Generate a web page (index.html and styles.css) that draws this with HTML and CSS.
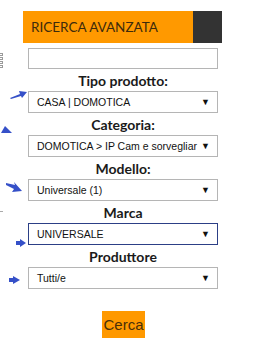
FILE: index.html
```html
<!DOCTYPE html>
<html>
<head>
<meta charset="UTF-8">
<title>Ricerca avanzata</title>
<link rel="stylesheet" href="styles.css">
</head>
<body>
<div class="side-icon">
  <span></span><span></span><span></span><span></span>
</div>
<div class="side-dash"></div>

<div class="box">
  <div class="head">
    <div class="head-title">RICERCA AVANZATA</div>
    <div class="head-dark"></div>
  </div>
  <div class="form">
    <div class="text-in"></div>

    <div class="lbl">Tipo prodotto:</div>
    <div class="sel"><span>CASA | DOMOTICA</span><b>&#9660;</b></div>

    <div class="lbl">Categoria:</div>
    <div class="sel"><span>DOMOTICA &gt; IP Cam e sorvegliar</span><b>&#9660;</b></div>

    <div class="lbl">Modello:</div>
    <div class="sel"><span>Universale (1)</span><b>&#9660;</b></div>

    <div class="lbl">Marca</div>
    <div class="sel focus"><span>UNIVERSALE</span><b>&#9660;</b></div>

    <div class="lbl">Produttore</div>
    <div class="sel"><span>Tutti/e</span><b>&#9660;</b></div>

    <div class="btn-row"><div class="btn">Cerca</div></div>
  </div>
</div>

<!-- annotation arrows -->
<svg class="arr a1" width="18" height="10" viewBox="0 0 18 10"><path d="M0 8 L10 4 L9 1 L17 2 L12 8 L11 6 L1 9 Z" fill="#3550c8"/></svg>
<svg class="arr a2" width="11" height="8" viewBox="0 0 11 8"><path d="M0 7 L4 0 L11 7 Z" fill="#3550c8"/></svg>
<svg class="arr a3" width="17" height="11" viewBox="0 0 17 11"><path d="M0 1 L9 3 L8 0 L16 9 L6 10 L8 7 L0 3 Z" fill="#3550c8"/></svg>
<svg class="arr a4" width="10" height="8" viewBox="0 0 10 8"><path d="M0 2 L4 2 L4 0 L10 4 L4 8 L4 6 L0 6 Z" fill="#3550c8"/></svg>
<svg class="arr a5" width="11" height="8" viewBox="0 0 11 8"><path d="M0 2 L4 2 L4 0 L11 4 L4 8 L4 6 L0 6 Z" fill="#3550c8"/></svg>
</body>
</html>
```

FILE: styles.css
```css
body {
  margin: 0;
  background: #ffffff;
  font-family: Lato, "Liberation Sans", sans-serif;
  color: #111111;
}
.box {
  margin-left: 23px;
  margin-top: 11px;
  width: 199px;
}
.head {
  display: flex;
  height: 32px;
}
.head-title {
  width: 170px;
  background-color: #ff9900;
  color: #3d2b0c;
  font-size: 13.5px;
  line-height: 32px;
  padding-left: 8px;
  box-sizing: border-box;
}
.head-dark {
  flex: 1;
  background-color: #333333;
}
.form {
  padding: 5px 4px 0 5px;
}
.text-in {
  height: 21px;
  border: 1px solid #b5b5b5;
  box-sizing: border-box;
}
.lbl {
  text-align: center;
  font-weight: bold;
  font-size: 14px;
  line-height: 20px;
  height: 22px;
  padding-top: 2px;
  box-sizing: border-box;
  color: #1a1a1a;
}
.sel {
  display: flex;
  align-items: center;
  height: 22px;
  border: 1px solid #b5b5b5;
  box-sizing: border-box;
  font-family: "Liberation Sans", Arial, sans-serif;
  font-size: 10.5px;
  color: #111111;
  padding: 0 7px 0 8px;
}
.sel span {
  flex: 1;
  white-space: nowrap;
}
.sel b {
  font-size: 9px;
  font-weight: normal;
  margin-left: 2px;
}
.sel.focus {
  border-color: #2c3f86;
}
.btn-row {
  display: flex;
  justify-content: center;
  padding-top: 22px;
}
.btn {
  width: 43px;
  height: 27px;
  margin-left: 1px;
  background-color: #ff9900;
  color: #4a2f08;
  font-family: "Liberation Sans", Arial, sans-serif;
  font-size: 15px;
  line-height: 27px;
  text-align: center;
}
.side-icon {
  position: absolute;
  left: 0;
  top: 53px;
  display: flex;
  flex-direction: column;
  gap: 1px;
}
.side-icon span {
  width: 3px;
  height: 3px;
  border: 1px solid #9a9a9a;
  border-left: none;
  box-sizing: border-box;
}
.side-dash {
  position: absolute;
  left: 0;
  top: 211px;
  width: 3px;
  height: 1px;
  background: #aaaaaa;
}
.arr {
  position: absolute;
}
.a1 { left: 10px; top: 90px; }
.a2 { left: 1px; top: 126px; }
.a3 { left: 6px; top: 182px; }
.a4 { left: 16px; top: 239px; }
.a5 { left: 9px; top: 276px; }
```
